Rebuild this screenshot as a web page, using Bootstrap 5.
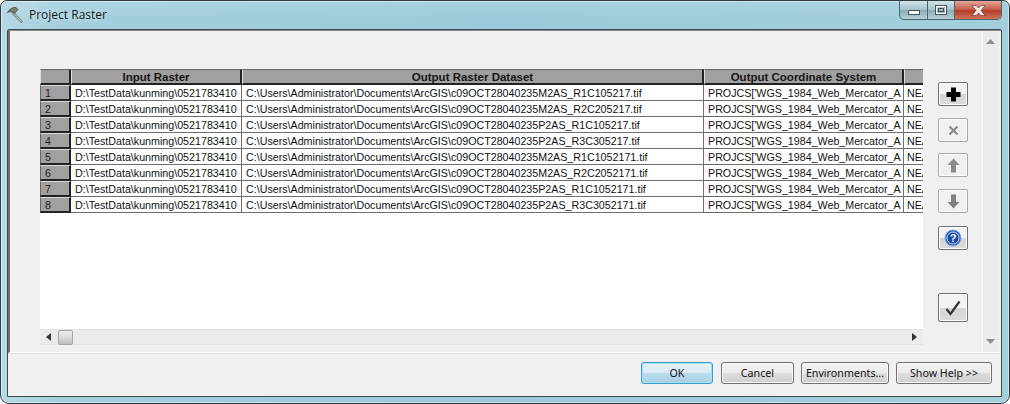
<!DOCTYPE html>
<html lang="en">
<head>
<meta charset="utf-8">
<title>Project Raster</title>
<link href="https://cdn.jsdelivr.net/npm/bootstrap@5.3.0/dist/css/bootstrap.min.css" rel="stylesheet">
<style>
html,body{width:1010px;height:404px;margin:0;overflow:hidden;background:#fff}
.win-frame{width:1010px;height:404px;border:1px solid #2f3a3f;border-radius:7px 7px 9px 9px;background:linear-gradient(90deg,#b7d9e3 0,#a3cfdd 6%,#9ccada 50%,#a3cfdc 100%);padding:0 7px 6px 6px;box-shadow:inset 0 0 0 1px rgba(255,255,255,.45)}
.title-bar{height:28px;flex:none;background:linear-gradient(180deg,rgba(255,255,255,.12),rgba(255,255,255,0) 60%)}
.title-text{font:12px "Open Sans",sans-serif;color:#10181c;text-shadow:0 0 6px rgba(255,255,255,.8);margin-left:4px;line-height:14px}
.cap-group{height:19px;width:103px;margin-right:0;border:1px solid #4a6470;border-top:0;border-radius:0 0 5px 5px;overflow:hidden;background:linear-gradient(180deg,#d3e3e8,#a5c2cc 48%,#8cabb5 52%,#b4d0d8)}
.cap-min{width:28px;border-right:1px solid #4a6470}
.cap-max{width:27px;border-right:1px solid #4a6470}
.cap-close{flex:1;background:linear-gradient(180deg,#e0a69b 0,#c9614e 45%,#b43b26 55%,#d0745c 100%)}
.client{flex:1;min-height:0;border:1px solid #3c4a50;border-radius:2px 2px 0 0;background:#f0f0f0}
.upper-pane{height:323px;flex:none;border-left:2px solid #6e6e6e;border-top:1px solid #8a8a8a;border-bottom:1px solid #fff;box-shadow:0 1px 0 #dfdfdf}
.pane-main{width:973px;flex:none;padding:38px 0 0 30px}
.grid-wrap{width:883px;height:260px;background:#fff;overflow:hidden}
.ras-grid{table-layout:fixed;width:883px;border-collapse:separate;border-spacing:0;margin:0;font:10.7px/15px "Liberation Sans",Arial,sans-serif;color:#111}
.ras-grid th,.ras-grid td{height:16px;padding:1px 0 0;white-space:nowrap;overflow:hidden;box-sizing:border-box}
.ras-grid th{background:#a0a0a0;text-align:center;font-size:11.5px;font-weight:700;color:#161616;border-top:1px solid #666;border-left:1px solid #ddd;border-right:2px solid #222;border-bottom:2px solid #222;line-height:12px}
.ras-grid th:last-child{border-right:0}
.ras-grid td{background:#fff;padding-left:4px;border-right:1px solid #6f6f6f;border-bottom:1px solid #6f6f6f;line-height:14px}
.ras-grid td:last-child{border-right:0;padding-left:3px}
.ras-grid td.row-head{background:#a0a0a0;padding-left:4px;border-top:1px solid #ddd;border-left:1px solid #666;border-right:2px solid #222;border-bottom:2px solid #222;color:#222;line-height:12px}
.h-scroll{width:883px;height:16px;background:#ebebeb;border-top:1px solid #e2e2e2;border-bottom:1px solid #e4e4e4}
.arrow-left{margin-left:6px}
.arrow-right{margin-left:auto;margin-right:6px}
.thumb-h{width:15px;height:15px;margin-left:7px;border:1px solid #a3a3a3;border-radius:2px;background:linear-gradient(180deg,#f0f0f0,#d8d8d8 50%,#bdbdbd)}
.tool-col{width:30px;margin-left:15px;flex:none;padding-top:13px}
.tool-btn{width:30px;height:24px;border:1px solid #a9a9a9;border-radius:2px;background:#f0f0f0;box-shadow:inset 0 0 0 1px #fcfcfc}
.tool-on{border-color:#707070;background:linear-gradient(180deg,#f2f2f2 50%,#d5d5d5 51%,#dcdcdc)}
.tool-check{height:29px;margin-top:43px}
.gap-11{margin-top:11px}.gap-12{margin-top:12px}.gap-13{margin-top:13px}
.v-scroll{width:15px;flex:none;margin-left:auto;margin-right:3px;background:#ececec;box-shadow:-1px 0 0 #f7f7f7}
.bottom-row{flex:1;padding:9px 9px 0 0}
.title-left{height:28px}
.dlg-btn{height:22px;padding:0;border:1px solid #707070;border-radius:3px;background:linear-gradient(180deg,#f3f3f3 0,#ebebeb 48%,#dcdcdc 52%,#cfcfcf 100%);font:10.7px/18px "Noto Sans",sans-serif;color:#111;box-shadow:inset 0 0 0 1px #fbfbfb}
.dlg-btn:hover{border-color:#707070;color:#111}
.dlg-ok{width:72px;border-color:#3c9ccc;background:linear-gradient(180deg,#e6f3fa 0,#d8eaf4 48%,#bcdcee 52%,#a9cfe6 100%);box-shadow:inset 0 0 0 1px #9fe1f7;margin-right:8px}
.dlg-cancel{width:73px;margin-right:7px}
.dlg-env{width:88px;margin-right:7px}
.dlg-help{width:96px}
</style>
</head>
<body>
<div class="win-frame d-flex flex-column">
  <div class="title-bar d-flex justify-content-between align-items-start">
    <div class="title-left d-flex align-items-center">
      <svg width="18" height="18" viewBox="0 0 18 18"><path d="M6.500 6 15.500 15.500 14.500 17 5 7.500Z" fill="#b5b5b0" stroke="#5f5f58" stroke-width=".7"/><path d="M.5 6.500C2.500 3 5.500 1 9 1.500L11 3.500 7.500 7.500 5.500 6C3.800 5.400 2.200 5.600.5 6.500Z" fill="#7d7d78" stroke="#3b3b36" stroke-width=".7"/></svg>
      <span class="title-text">Project Raster</span>
    </div>
    <div class="cap-group d-flex">
      <div class="cap-min d-flex align-items-end justify-content-center pb-1"><svg width="12" height="5"><rect x=".5" y=".5" width="11" height="4" fill="#fff" stroke="#41565e"/></svg></div>
      <div class="cap-max d-flex align-items-center justify-content-center"><svg width="12" height="10"><rect x=".5" y=".5" width="11" height="9" fill="none" stroke="#41565e"/><rect x="1.500" y="1.500" width="9" height="7" fill="none" stroke="#fff"/><rect x="3.500" y="3.500" width="5" height="3" fill="none" stroke="#41565e"/></svg></div>
      <div class="cap-close d-flex align-items-center justify-content-center"><svg width="15" height="11" viewBox="0 0 15 11"><path d="M1 .5H5L7.500 3 10 .5H14L10 5.500 14 10.500H10L7.500 8 5 10.500H1L5 5.500Z" fill="#f2eeea" stroke="#7a3a30" stroke-width=".7"/></svg></div>
    </div>
  </div>
  <div class="client d-flex flex-column">
    <div class="upper-pane d-flex">
      <div class="pane-main d-flex">
        <div>
          <div class="grid-wrap">
            <table class="ras-grid">
              <colgroup><col style="width:31px"><col style="width:171px"><col style="width:462px"><col style="width:200px"><col style="width:19px"></colgroup>
              <thead><tr><th></th><th>Input Raster</th><th>Output Raster Dataset</th><th>Output Coordinate System</th><th></th></tr></thead>
              <tbody>
                <tr><td class="row-head">1</td><td>D:\TestData\kunming\0521783410</td><td>C:\Users\Administrator\Documents\ArcGIS\c09OCT28040235M2AS_R1C105217.tif</td><td>PROJCS['WGS_1984_Web_Mercator_A</td><td>NEAREST</td></tr>
                <tr><td class="row-head">2</td><td>D:\TestData\kunming\0521783410</td><td>C:\Users\Administrator\Documents\ArcGIS\c09OCT28040235M2AS_R2C205217.tif</td><td>PROJCS['WGS_1984_Web_Mercator_A</td><td>NEAREST</td></tr>
                <tr><td class="row-head">3</td><td>D:\TestData\kunming\0521783410</td><td>C:\Users\Administrator\Documents\ArcGIS\c09OCT28040235P2AS_R1C105217.tif</td><td>PROJCS['WGS_1984_Web_Mercator_A</td><td>NEAREST</td></tr>
                <tr><td class="row-head">4</td><td>D:\TestData\kunming\0521783410</td><td>C:\Users\Administrator\Documents\ArcGIS\c09OCT28040235P2AS_R3C305217.tif</td><td>PROJCS['WGS_1984_Web_Mercator_A</td><td>NEAREST</td></tr>
                <tr><td class="row-head">5</td><td>D:\TestData\kunming\0521783410</td><td>C:\Users\Administrator\Documents\ArcGIS\c09OCT28040235M2AS_R1C1052171.tif</td><td>PROJCS['WGS_1984_Web_Mercator_A</td><td>NEAREST</td></tr>
                <tr><td class="row-head">6</td><td>D:\TestData\kunming\0521783410</td><td>C:\Users\Administrator\Documents\ArcGIS\c09OCT28040235M2AS_R2C2052171.tif</td><td>PROJCS['WGS_1984_Web_Mercator_A</td><td>NEAREST</td></tr>
                <tr><td class="row-head">7</td><td>D:\TestData\kunming\0521783410</td><td>C:\Users\Administrator\Documents\ArcGIS\c09OCT28040235P2AS_R1C1052171.tif</td><td>PROJCS['WGS_1984_Web_Mercator_A</td><td>NEAREST</td></tr>
                <tr><td class="row-head">8</td><td>D:\TestData\kunming\0521783410</td><td>C:\Users\Administrator\Documents\ArcGIS\c09OCT28040235P2AS_R3C3052171.tif</td><td>PROJCS['WGS_1984_Web_Mercator_A</td><td>NEAREST</td></tr>
              </tbody>
            </table>
          </div>
          <div class="h-scroll d-flex align-items-center">
            <svg class="arrow-left" width="5" height="8"><path d="M5 0V8L0 4Z" fill="#333"/></svg>
            <div class="thumb-h"></div>
            <svg class="arrow-right" width="5" height="8"><path d="M0 0V8L5 4Z" fill="#333"/></svg>
          </div>
        </div>
        <div class="tool-col d-flex flex-column">
          <div class="tool-btn tool-on d-flex align-items-center justify-content-center"><svg width="15" height="15" viewBox="0 0 15 15"><path d="M5 .5H10V5H14.500V10H10V14.500H5V10H.5V5H5Z" fill="#000"/></svg></div>
          <div class="tool-btn gap-12 d-flex align-items-center justify-content-center"><svg width="11" height="11" viewBox="0 0 11 11"><path d="M1.500 1.500 9.500 9.500M9.500 1.500 1.500 9.500" stroke="#8a8a8a" stroke-width="2.200" fill="none"/></svg></div>
          <div class="tool-btn gap-11 d-flex align-items-center justify-content-center"><svg width="13" height="15" viewBox="0 0 13 15"><path d="M6.500 .5 12.500 7H9V14.500H4V7H.5Z" fill="#8a8a8a"/></svg></div>
          <div class="tool-btn gap-12 d-flex align-items-center justify-content-center"><svg width="13" height="15" viewBox="0 0 13 15"><path d="M6.500 14.500 12.500 8H9V.5H4V8H.5Z" fill="#808080"/></svg></div>
          <div class="tool-btn tool-on gap-13 d-flex align-items-center justify-content-center"><svg width="18" height="18" viewBox="0 0 18 18"><circle cx="9" cy="9" r="8" fill="#2b62c4" stroke="#7fa3df"/><circle cx="9" cy="9" r="6" fill="#1a47a8" stroke="#e8f0ff" stroke-width=".8"/><text x="9" y="13" text-anchor="middle" font-family="Liberation Sans,sans-serif" font-size="11" font-weight="700" fill="#fff">?</text></svg></div>
          <div class="tool-btn tool-on tool-check d-flex align-items-center justify-content-center"><svg width="16" height="16" viewBox="0 0 16 16"><path d="M1.500 9 5.500 14 14.500 1.500" fill="none" stroke="#333" stroke-width="2.200"/></svg></div>
        </div>
      </div>
      <div class="v-scroll d-flex flex-column justify-content-between align-items-center py-2">
        <svg width="9" height="5"><path d="M4.500 0 9 5H0Z" fill="#8f8f8f"/></svg>
        <svg width="9" height="5"><path d="M4.500 5 9 0H0Z" fill="#8f8f8f"/></svg>
      </div>
    </div>
    <div class="bottom-row d-flex justify-content-end align-items-start">
      <button type="button" class="btn dlg-btn dlg-ok">OK</button>
      <button type="button" class="btn dlg-btn dlg-cancel">Cancel</button>
      <button type="button" class="btn dlg-btn dlg-env">Environments...</button>
      <button type="button" class="btn dlg-btn dlg-help">Show Help &gt;&gt;</button>
    </div>
  </div>
</div>
<script src="https://cdn.jsdelivr.net/npm/bootstrap@5.3.0/dist/js/bootstrap.bundle.min.js"></script>
</body>
</html>
